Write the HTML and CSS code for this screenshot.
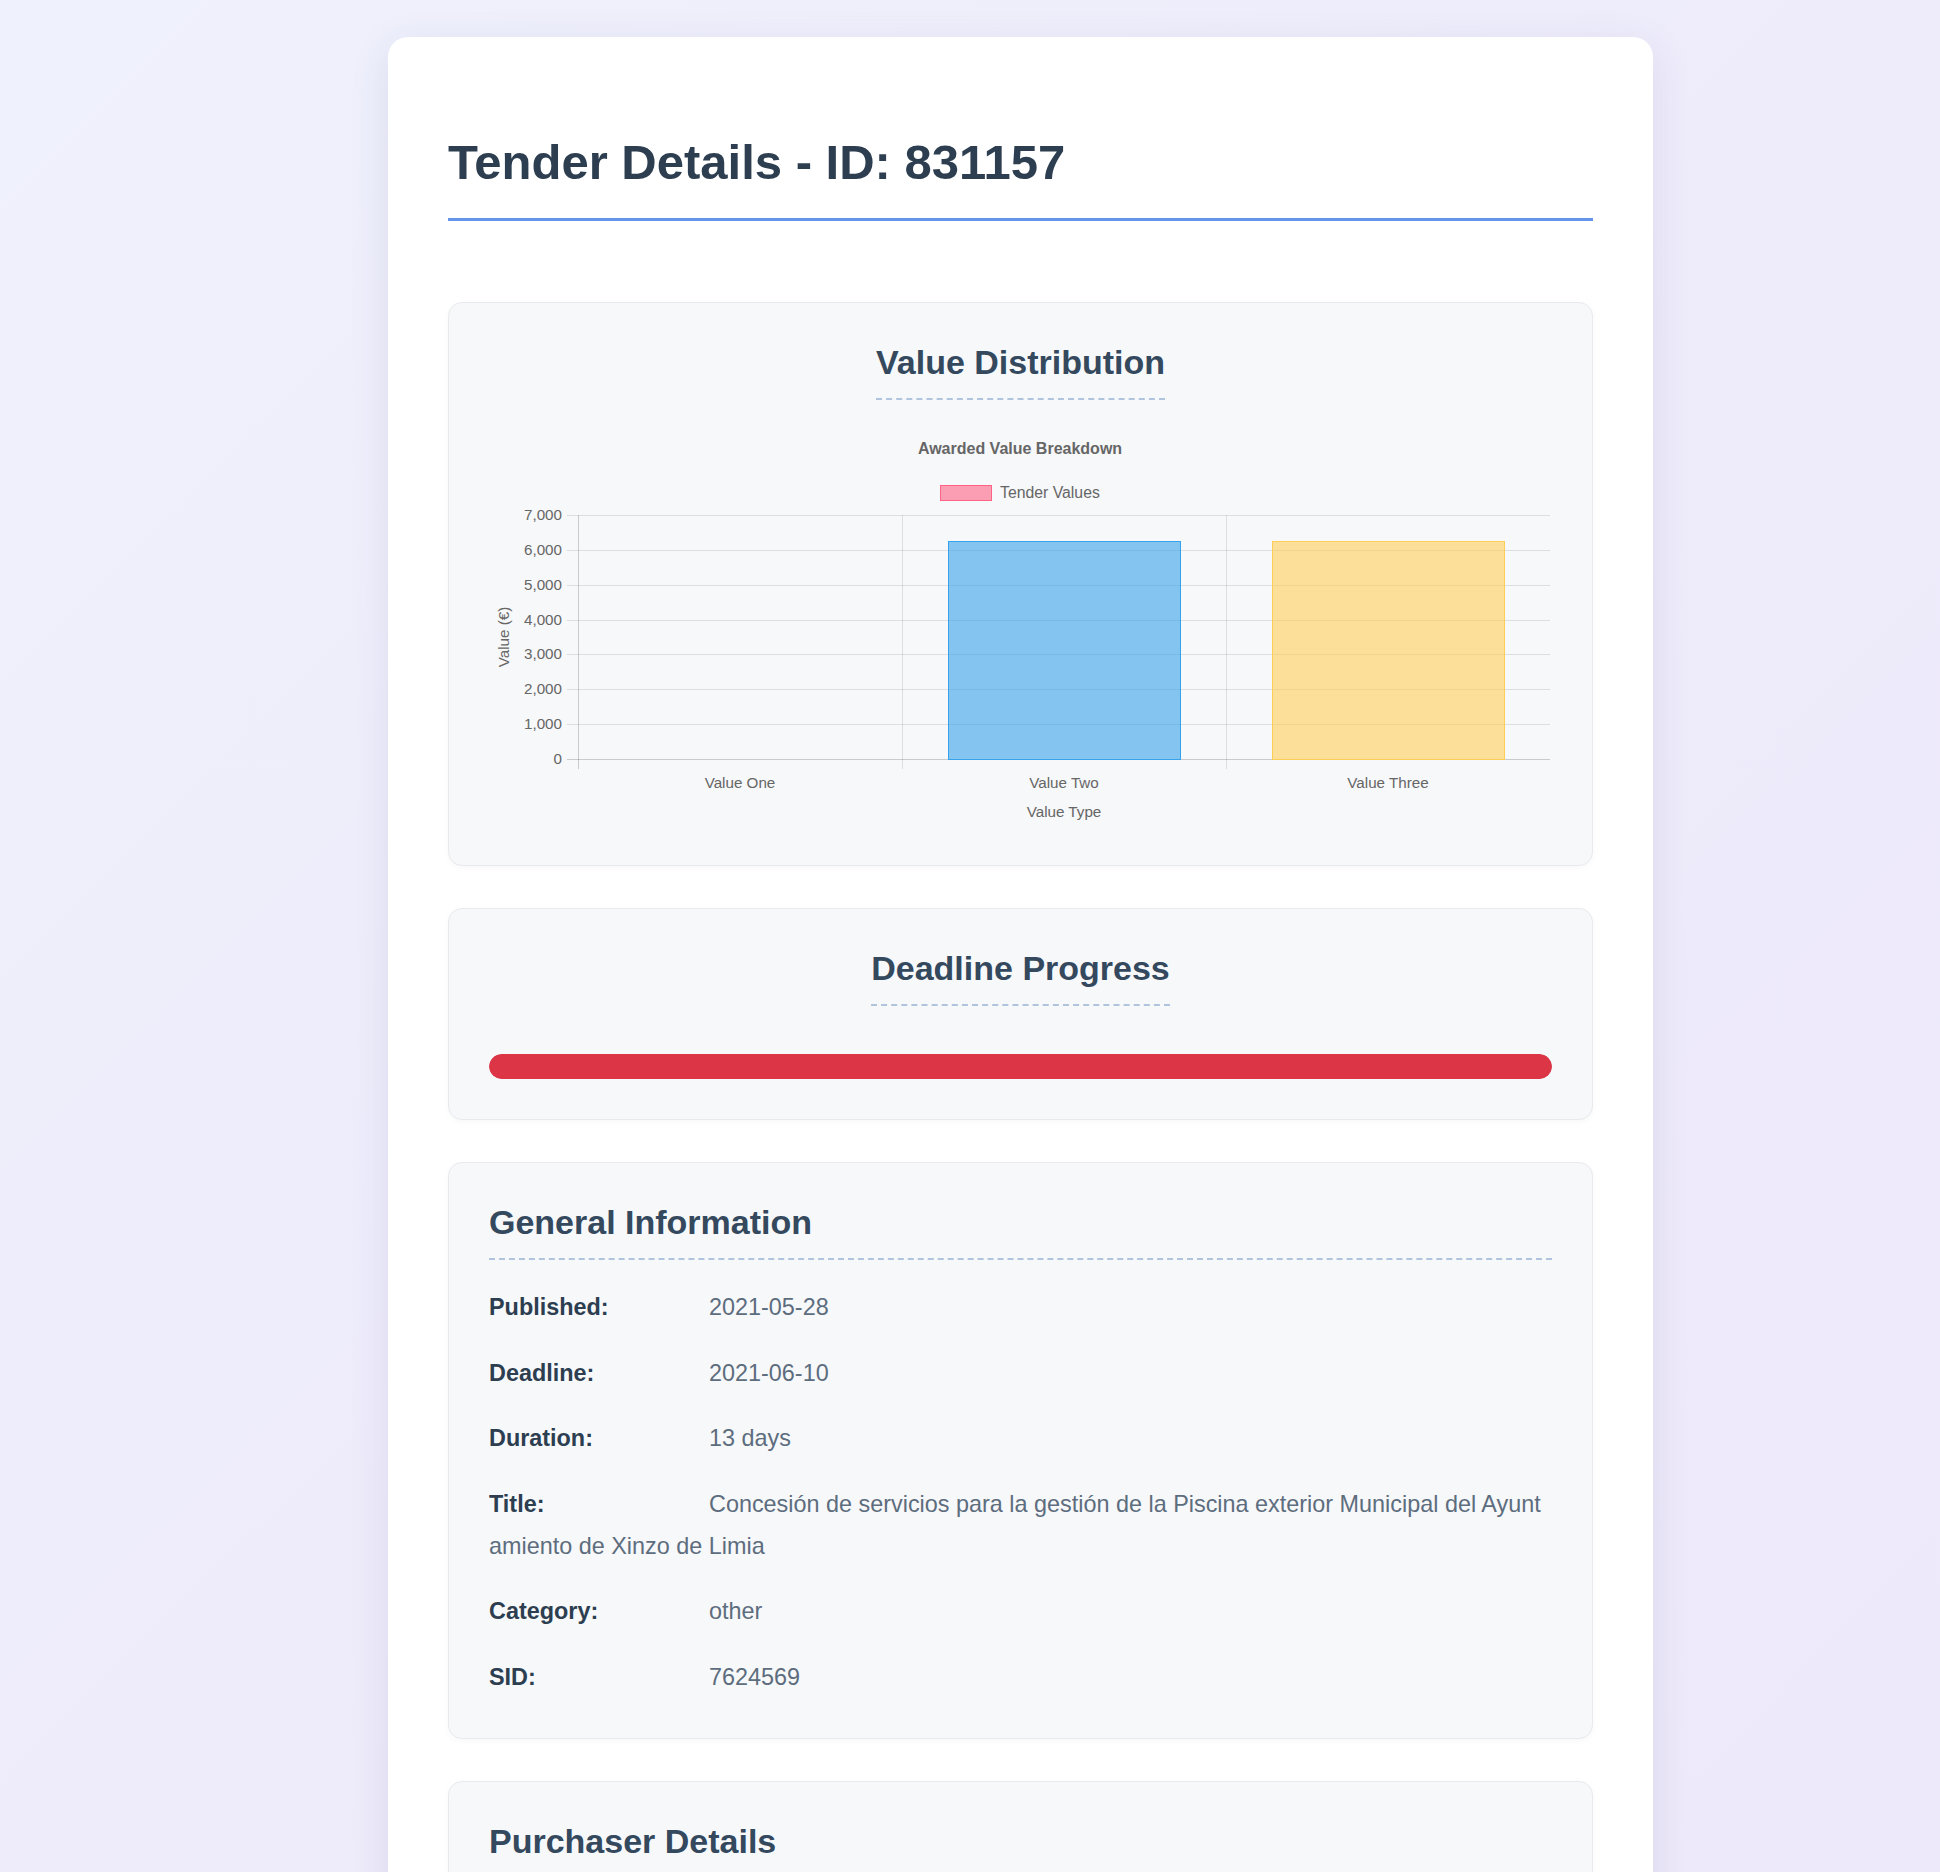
FILE: index.html
```html
<!DOCTYPE html>
<html lang="en">
<head>
<meta charset="utf-8">
<title>Tender Details - ID: 831157</title>
<link rel="stylesheet" href="styles.css">
</head>
<body>
<div class="page">
  <main class="container">
    <h1 class="page-title">Tender Details - ID: 831157</h1>

    <section class="panel panel-center">
      <h2 class="panel-heading">Value Distribution</h2>
      <div class="chart">
        <svg class="chart-svg" width="1061" height="405" viewBox="0 0 1061 405" xmlns="http://www.w3.org/2000/svg">
          <text class="chart-title" x="531" y="34" text-anchor="middle">Awarded Value Breakdown</text>
          <rect class="legend-box" x="451.5" y="65.5" width="51" height="15"/>
          <text class="chart-text legend-text" x="511" y="78">Tender Values</text>

          <g class="grid">
            <line x1="78" y1="95.5" x2="1061" y2="95.5"/>
            <line x1="78" y1="130.5" x2="1061" y2="130.5"/>
            <line x1="78" y1="165.5" x2="1061" y2="165.5"/>
            <line x1="78" y1="200.5" x2="1061" y2="200.5"/>
            <line x1="78" y1="234.5" x2="1061" y2="234.5"/>
            <line x1="78" y1="269.5" x2="1061" y2="269.5"/>
            <line x1="78" y1="304.5" x2="1061" y2="304.5"/>
            <line x1="413.5" y1="95" x2="413.5" y2="349"/>
            <line x1="737.5" y1="95" x2="737.5" y2="349"/>
          </g>
          <g class="axis">
            <line x1="89.5" y1="95" x2="89.5" y2="349"/>
            <line x1="78" y1="339.5" x2="1061" y2="339.5"/>
          </g>

          <g class="chart-text" text-anchor="end">
            <text x="73" y="100">7,000</text>
            <text x="73" y="135">6,000</text>
            <text x="73" y="170">5,000</text>
            <text x="73" y="205">4,000</text>
            <text x="73" y="239">3,000</text>
            <text x="73" y="274">2,000</text>
            <text x="73" y="309">1,000</text>
            <text x="73" y="344">0</text>
          </g>

          <rect class="bar bar-blue" x="459.5" y="121.5" width="232" height="218"/>
          <rect class="bar bar-yellow" x="783.5" y="121.5" width="232" height="218"/>

          <g class="chart-text" text-anchor="middle">
            <text x="251" y="368">Value One</text>
            <text x="575" y="368">Value Two</text>
            <text x="899" y="368">Value Three</text>
            <text x="575" y="397">Value Type</text>
          </g>
          <text class="chart-text" text-anchor="middle" transform="translate(20 217) rotate(-90)">Value (€)</text>
        </svg>
      </div>
    </section>

    <section class="panel panel-center">
      <h2 class="panel-heading">Deadline Progress</h2>
      <div class="progress">
        <div class="progress-fill" style="width: 100%"></div>
      </div>
    </section>

    <section class="panel">
      <h2 class="panel-heading panel-heading-full">General Information</h2>
      <div class="info-row"><span class="info-label">Published:</span><span class="info-value">2021-05-28</span></div>
      <div class="info-row"><span class="info-label">Deadline:</span><span class="info-value">2021-06-10</span></div>
      <div class="info-row"><span class="info-label">Duration:</span><span class="info-value">13 days</span></div>
      <div class="info-row"><span class="info-label">Title:</span><span class="info-value">Concesión de servicios para la gestión de la Piscina exterior Municipal del Ayuntamiento de Xinzo de Limia</span></div>
      <div class="info-row"><span class="info-label">Category:</span><span class="info-value">other</span></div>
      <div class="info-row"><span class="info-label">SID:</span><span class="info-value">7624569</span></div>
    </section>

    <section class="panel">
      <h2 class="panel-heading panel-heading-full">Purchaser Details</h2>
      <div class="info-row"><span class="info-label">Name:</span><span class="info-value">Concello de Xinzo de Limia</span></div>
      <div class="info-row"><span class="info-label">ID:</span><span class="info-value">—</span></div>
    </section>
  </main>
</div>
</body>
</html>
```

FILE: styles.css
```css
html, body {
  margin: 0;
  padding: 0;
}

body {
  font-family: "Liberation Sans", Arial, Helvetica, sans-serif;
  background: linear-gradient(135deg, #eff1fc 0%, #eeebfb 60%, #ede9fa 100%);
  background-attachment: fixed;
  min-height: 1872px;
  color: #2c3e50;
}

.page {
  padding: 37px 0 60px 101px;
}

.container {
  box-sizing: border-box;
  width: 1265px;
  margin: 0 auto;
  padding: 60px;
  background: #ffffff;
  border-radius: 20px;
  box-shadow: 0 10px 40px rgba(60, 60, 110, 0.10);
}

.page-title {
  margin: 37px 0 81px;
  padding-bottom: 28px;
  border-bottom: 3px solid #6495ed;
  font-size: 49px;
  line-height: normal;
  font-weight: 700;
  color: #2c3e50;
}

.panel {
  background: #f7f8fa;
  border: 1px solid #e8eaee;
  border-radius: 14px;
  padding: 40px;
  margin-bottom: 42px;
  box-shadow: 0 2px 6px rgba(0, 0, 0, 0.03);
}

.panel-center {
  text-align: center;
}

.panel-heading {
  display: inline-block;
  margin: 0 0 20px;
  padding-bottom: 16px;
  border-bottom: 2px dashed #b0c4de;
  font-size: 34px;
  line-height: normal;
  font-weight: 700;
  color: #34495e;
}

.panel-heading-full {
  display: block;
  margin-bottom: 26px;
}

.chart {
  text-align: left;
  height: 405px;
}

.chart-svg {
  display: block;
  font-family: "Liberation Sans", Arial, Helvetica, sans-serif;
}

.chart-title {
  font-size: 16px;
  font-weight: 700;
  fill: #666666;
}

.chart-text {
  font-size: 15.2px;
  fill: #666666;
}

.legend-text {
  font-size: 15.8px;
}

.legend-box {
  fill: rgba(255, 99, 132, 0.6);
  stroke: rgb(255, 99, 132);
  stroke-width: 1;
}

.grid line {
  stroke: rgba(0, 0, 0, 0.1);
  stroke-width: 1;
}

.axis line {
  stroke: rgba(0, 0, 0, 0.18);
  stroke-width: 1;
}

.bar {
  stroke-width: 1;
}

.bar-blue {
  fill: rgba(54, 162, 235, 0.6);
  stroke: rgb(54, 162, 235);
}

.bar-yellow {
  fill: rgba(255, 206, 86, 0.6);
  stroke: rgb(255, 206, 86);
}

.progress {
  margin-top: 28px;
  height: 25px;
  border-radius: 13px;
  background: #e9ecef;
  overflow: hidden;
}

.progress-fill {
  height: 100%;
  background: #dc3545;
  border-radius: 13px;
}

.info-row {
  font-size: 23.4px;
  line-height: 42px;
  margin-bottom: 23.5px;
  word-break: break-all;
}

.info-row:last-child {
  margin-bottom: 0;
}

.info-label {
  display: inline-block;
  width: 220px;
  font-weight: 700;
  color: #2c3e50;
}

.info-value {
  color: #5d6d7e;
}
```
